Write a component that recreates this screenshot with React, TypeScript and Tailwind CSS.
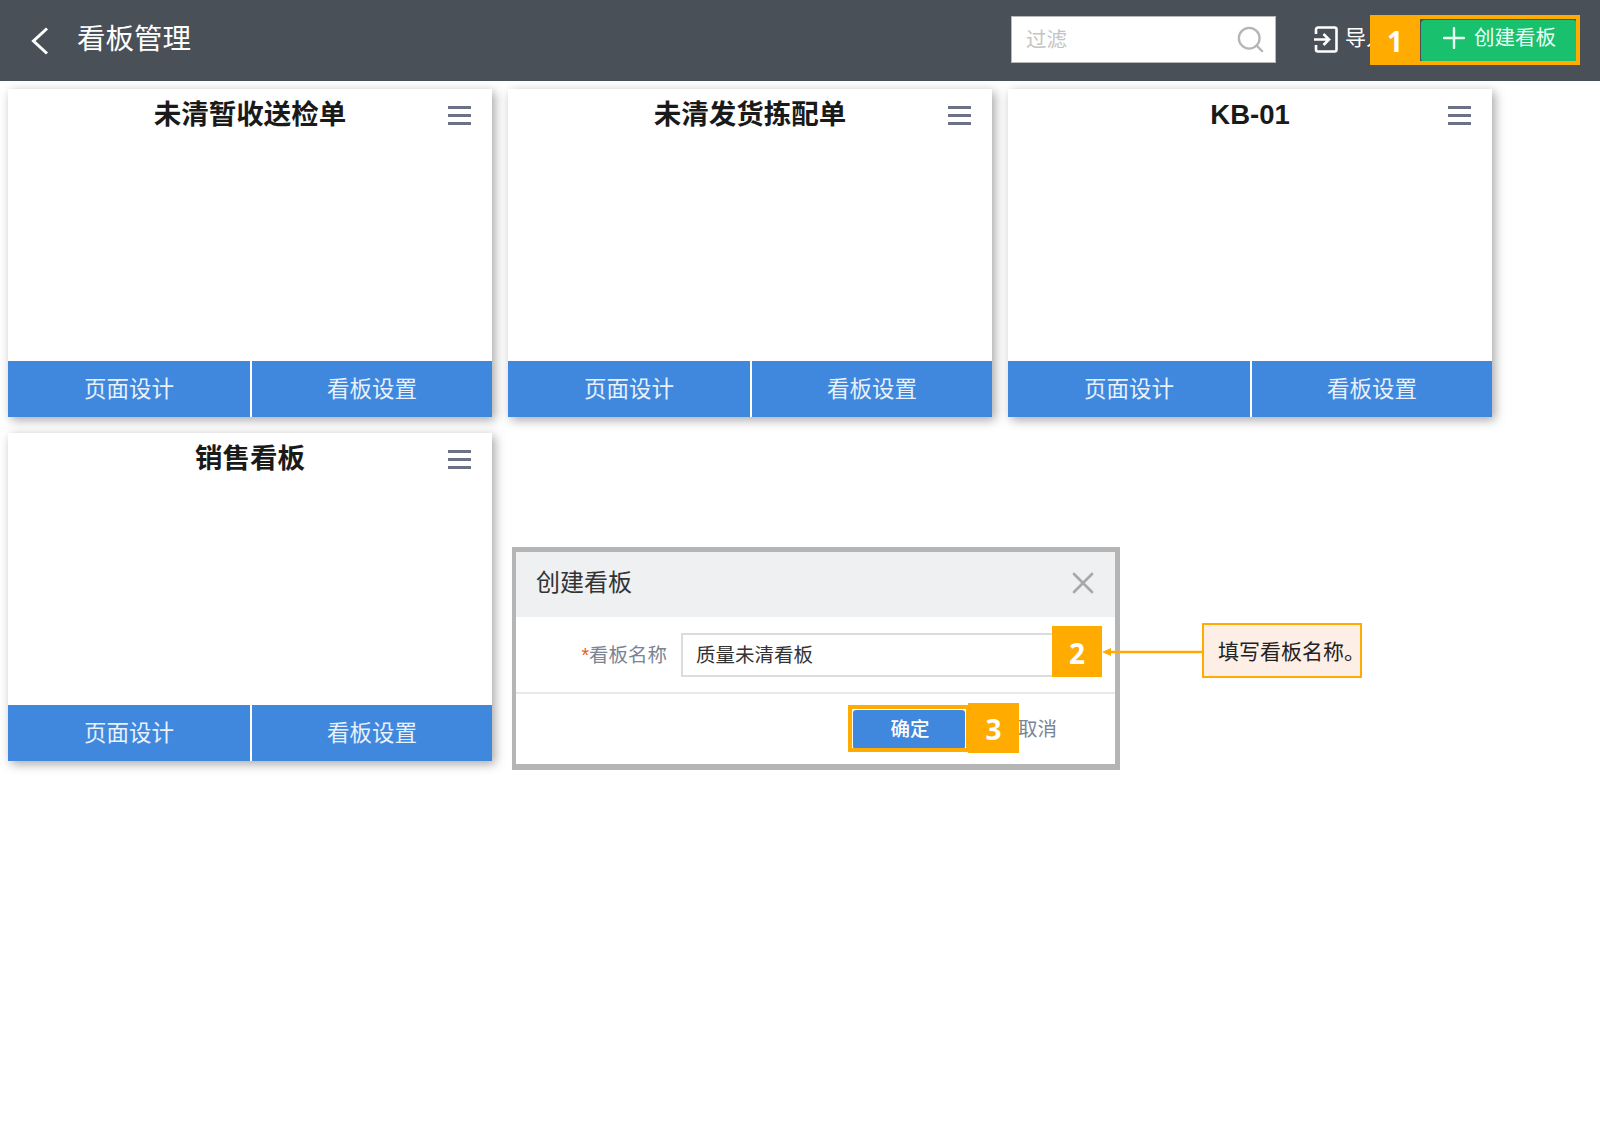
import { Plus, Search, X } from "lucide-react";

const boards = ["未清暂收送检单", "未清发货拣配单", "KB-01", "销售看板"];

function BackIcon() {
  return (
    <svg width="18" height="28" viewBox="0 0 18 28" fill="none" stroke="white" strokeWidth="3">
      <path d="M16 1.5L2.5 14L16 26.5" />
    </svg>
  );
}

function ImportIcon() {
  return (
    <svg width="25" height="27" viewBox="0 0 25 27" fill="none" stroke="white" strokeWidth="2.6">
      <path d="M3 8V3.5A2 2 0 0 1 5 1.5H21.5A2 2 0 0 1 23.5 3.5V23.5A2 2 0 0 1 21.5 25.5H5A2 2 0 0 1 3 23.5V19" />
      <path d="M1 13.5H16M10.5 8L16 13.5L10.5 19" />
    </svg>
  );
}

function Marker({ n, className }: { n: number; className: string }) {
  return (
    <div
      className={`absolute flex items-center justify-center bg-[#ffab00] pt-[2px] text-[28px] font-bold text-white font-['Open_Sans',sans-serif] ${className}`}
    >
      {n}
    </div>
  );
}

function BoardCard({ title }: { title: string }) {
  return (
    <div className="flex h-[328px] flex-col bg-white shadow-[3px_3px_10px_rgba(0,0,0,0.35)]">
      <div className="relative flex-1">
        <h3 className="text-center text-[27.5px] leading-[51px] font-bold text-[#1a1a1a]">{title}</h3>
        <div className="absolute top-[17px] right-[21px] flex w-[23px] flex-col gap-[5px]">
          <div className="h-[3px] bg-[#6b7285]" />
          <div className="h-[3px] bg-[#6b7285]" />
          <div className="h-[3px] bg-[#6b7285]" />
        </div>
      </div>
      <div className="flex h-14 gap-[2px] text-[22.5px] text-[#e8f0fb]">
        <div className="flex w-[242px] items-center justify-center bg-[#3f88de] pt-[2px]">页面设计</div>
        <div className="flex flex-1 items-center justify-center bg-[#3f88de] pt-[2px]">看板设置</div>
      </div>
    </div>
  );
}

export default function App() {
  return (
    <div className="relative h-[1138px] w-[1600px] overflow-hidden bg-white font-['Liberation_Sans','Noto_Sans_CJK_SC',sans-serif]">
      <header className="flex h-[81px] items-center bg-[#4a5058] pr-[23px] pl-[31px] text-white">
        <BackIcon />
        <h1 className="mb-[2px] ml-[28px] text-[28.5px] font-normal">看板管理</h1>
        <div className="mb-[2px] ml-auto flex h-[47px] w-[265px] items-center justify-between border border-[#b8b8b8] bg-white pr-[9px] pl-[14px]">
          <span className="pt-[2px] text-[20.5px] text-[#c4c4c4]">过滤</span>
          <Search size={31} strokeWidth={1.8} className="text-[#b5b5b5]" />
        </div>
        <div className="mb-[3px] ml-[37px] flex items-center gap-[7px]">
          <ImportIcon />
          <span className="mb-[2px] text-[21px]">导入</span>
        </div>
        <button className="ml-[34px] flex h-[42px] w-[156px] items-center gap-[3px] rounded-[4px] bg-[#19c06d] pb-[5px] pl-[16px] text-[20.5px] text-[#eafff4]">
          <Plus size={34} strokeWidth={1.7} />
          创建看板
        </button>
      </header>

      <div className="grid grid-cols-[repeat(3,484px)] gap-4 px-2 pt-2">
        {boards.map((title) => (
          <BoardCard key={title} title={title} />
        ))}
      </div>

      {/* dialog */}
      <div className="absolute top-[547px] left-[512px] flex h-[223px] w-[608px] flex-col border-t-[5px] border-r-[5px] border-b-[6px] border-l-[4px] border-[#b5b5b5] bg-white">
        <div className="flex h-[65px] items-center justify-between bg-[#eef0f2] pr-[14px] pb-[4px] pl-[20px]">
          <span className="text-[24px] text-[#333]">创建看板</span>
          <X size={36} strokeWidth={1.8} className="text-[#a8a8a8]" />
        </div>
        <div className="flex h-[77px] items-start border-b-2 border-[#e8e8e8] pt-[16px]">
          <div className="w-[151px] pt-[8px] text-right text-[19.5px] leading-[28px] text-[#7a8594]">
            <span className="text-[#f0552e]">*</span>看板名称
          </div>
          <div className="ml-[14px] flex h-[44px] w-[379px] items-center border-2 border-[#dcdcdc] pt-[2px] pl-[13px] text-[19.5px] text-[#333]">
            质量未清看板
          </div>
        </div>
        <div className="flex flex-1 items-center pl-[336px]">
          <button className="ml-[1px] h-[39px] w-[112px] rounded-[3px] bg-[#3f88de] pt-[2px] pl-[2px] text-[19.5px] font-medium text-white">确定</button>
          <span className="ml-[53px] pt-[2px] text-[19.5px] text-[#7a8594]">取消</span>
        </div>
      </div>

      {/* step annotations */}
      <div className="absolute top-[15px] left-[1370px] h-[50px] w-[210px] border-[4px] border-[#ffab00]" />
      <Marker n={1} className="top-[15px] left-[1370px] h-[50px] w-[50px]" />
      <Marker n={2} className="top-[626px] left-[1052px] h-[51px] w-[50px]" />
      <div className="absolute top-[705px] left-[848px] h-[47px] w-[122px] border-[4px] border-[#ffab00]" />
      <Marker n={3} className="top-[703px] left-[968px] h-[50px] w-[51px]" />

      <svg className="absolute top-[645px] left-[1102px]" width="102" height="14" viewBox="0 0 102 14">
        <path d="M8 7H102" stroke="#ffab00" strokeWidth="2.5" />
        <path d="M0 7L9 3V11Z" fill="#ffab00" />
      </svg>
      <div className="absolute top-[623px] left-[1202px] flex h-[55px] w-[160px] items-center border-2 border-[#ffab00] bg-[#fdeee6] pt-[3px] pl-[14px] text-[21px] whitespace-nowrap text-[#222]">
        填写看板名称。
      </div>
    </div>
  );
}
